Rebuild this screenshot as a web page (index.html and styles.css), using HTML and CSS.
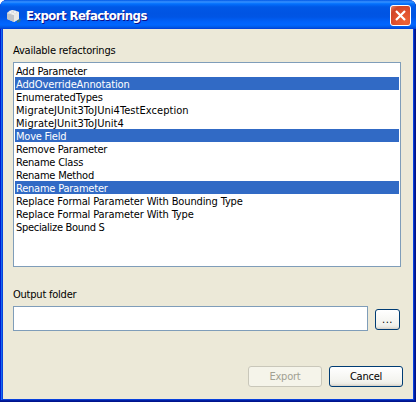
FILE: index.html
```html
<!DOCTYPE html>
<html lang="en">
<head>
<meta charset="utf-8">
<title>Export Refactorings</title>
<link rel="stylesheet" href="styles.css">
</head>
<body>
<div class="window">
  <header class="titlebar">
    <svg class="app-icon" width="16" height="16" viewBox="0 0 16 16">
      <path d="M11 10l4 1-1 3-3 1z" fill="#31718f"/>
      <path d="M1 5l5-3 7 2v7l-5 3-7-3z" fill="#d5d7d8"/>
      <path d="M1 5l7 2v7l-7-3z" fill="#c0c3c7"/>
      <path d="M8 7l5-3v7l-5 3z" fill="#e9e9e6"/>
      <path d="M1 5l5-3 7 2-5 3z" fill="#f2f2ee"/>
      <ellipse cx="4.5" cy="4" rx="1.8" ry="1.2" fill="#fff" stroke="#b5bbc4" stroke-width=".5"/>
      <ellipse cx="9" cy="4" rx="1.8" ry="1.2" fill="#fff" stroke="#b5bbc4" stroke-width=".5"/>
    </svg>
    <h1 class="title">Export Refactorings</h1>
    <button class="close" aria-label="Close">
      <svg width="11" height="11" viewBox="0 0 11 11"><path d="M1 1l9 9M10 1l-9 9" stroke="#fff" stroke-width="2.2"/></svg>
    </button>
  </header>
  <main class="content">
    <div class="label">Available refactorings</div>
    <ul class="list">
      <li>Add Parameter</li>
      <li class="selected loose">AddOverrideAnnotation</li>
      <li class="loose">EnumeratedTypes</li>
      <li class="looser">MigrateJUnit3ToJUni4TestException</li>
      <li class="looser">MigrateJUnit3ToJUnit4</li>
      <li class="selected">Move Field</li>
      <li>Remove Parameter</li>
      <li>Rename Class</li>
      <li>Rename Method</li>
      <li class="selected">Rename Parameter</li>
      <li class="loose">Replace Formal Parameter With Bounding Type</li>
      <li class="loose">Replace Formal Parameter With Type</li>
      <li class="tight">Specialize Bound S</li>
    </ul>
    <div class="label output-label">Output folder</div>
    <div class="folder-row">
      <div class="field"></div>
      <button class="button browse">...</button>
    </div>
    <div class="actions">
      <button class="button disabled">Export</button>
      <button class="button">Cancel</button>
    </div>
  </main>
</div>
</body>
</html>
```
FILE: styles.css
```css
* { box-sizing: border-box; }
body {
  margin: 0;
  background: #fff;
  font: 11px/13px "DejaVu Sans Condensed", "DejaVu Sans", sans-serif;
  font-stretch: condensed;
  letter-spacing: -0.22px;
  color: #000;
}
.window {
  width: 416px;
  height: 402px;
  display: flex;
  flex-direction: column;
  padding: 0 3px 3px;
  overflow: hidden;
  border-radius: 7px 7px 0 0;
  background: #0841dd;
  box-shadow: inset -1px -1px #00138c, inset -2px -2px #001ea0, inset 1px 0 #0019cf, inset 2px 0 #166aee;
}
.titlebar {
  height: 29px;
  flex: none;
  display: flex;
  align-items: center;
  margin: 0 -3px;
  padding: 2px 5px 0 6px;
  background: linear-gradient(#0058e6 0, #3a93ff 2px, #127dff 3px, #036ffc 4px, #0058e6 7px, #0054e3 13px, #0055e5 17px, #0062fb 22px, #0066ff 25px, #005be8 27px, #003dd7 29px);
}
.app-icon { flex: none; }
.title {
  flex: 1;
  margin: 0 0 0 4px;
  font-size: 13px;
  line-height: 16px;
  font-weight: bold;
  letter-spacing: -0.55px;
  color: #fff;
  text-shadow: 1px 1px #0f1089;
}
.close {
  width: 21px;
  height: 21px;
  padding: 0;
  display: flex;
  align-items: center;
  justify-content: center;
  border: 1px solid #fff;
  border-radius: 3px;
  background: radial-gradient(circle at 75% 80%, #ee6436, #dc4d2c 55%, #cf4528 75%, #e98a70);
}
.content {
  flex: 1;
  display: flex;
  flex-direction: column;
  padding: 15px 12px 12px 10px;
  background: #ece9d8;
}
.label { height: 18px; flex: none; }
.list {
  height: 205px;
  flex: none;
  margin: 0;
  padding: 1px;
  list-style: none;
  border: 1px solid #7f9db9;
  background: #fff;
}
.list li { height: 13px; padding-left: 1px; line-height: 15px; white-space: nowrap; }
.list .selected { background: #316ac5; color: #fff; }
.list .loose { letter-spacing: -0.12px; }
.list .looser { letter-spacing: 0.06px; }
.list .tight { letter-spacing: -0.3px; }
.output-label { margin-top: 21px; }
.folder-row { display: flex; gap: 7px; align-items: flex-start; }
.field { width: 355px; height: 25px; border: 1px solid #7f9db9; background: #fff; }
.button {
  width: 74px;
  height: 21px;
  padding: 0;
  border: 1px solid #003c74;
  border-radius: 3px;
  background: linear-gradient(#fff, #f3f3ee 75%, #ecebe5 88%, #d6d0c5);
  font: inherit;
  letter-spacing: inherit;
  color: #000;
}
.browse { width: 25px; margin-top: 3px; letter-spacing: 0.5px; }
.disabled { border-color: #c9c7ba; background: #f5f4ea; color: #a1a192; }
.actions { display: flex; justify-content: flex-end; gap: 7px; margin: auto -2px 0 0; }
```
